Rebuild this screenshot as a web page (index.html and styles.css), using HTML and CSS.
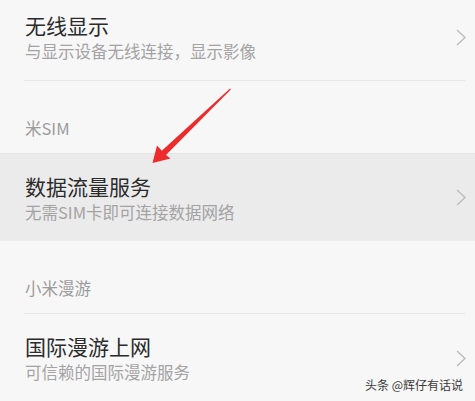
FILE: index.html
```html
<!DOCTYPE html>
<html lang="zh">
<head>
<meta charset="utf-8">
<link rel="stylesheet" href="styles.css">
</head>
<body>
<div class="page">
  <div class="row row-first">
    <div class="text">
      <div class="title">无线显示</div>
      <div class="sub">与显示设备无线连接，显示影像</div>
    </div>
    <svg class="chev" viewBox="0 0 10 17"><polyline points="1,1 9,8.5 1,16"/></svg>
  </div>
  <div class="divider"></div>
  <div class="section">米SIM</div>
  <div class="row row-active">
    <div class="text">
      <div class="title">数据流量服务</div>
      <div class="sub">无需SIM卡即可连接数据网络</div>
    </div>
    <svg class="chev" viewBox="0 0 10 17"><polyline points="1,1 9,8.5 1,16"/></svg>
  </div>
  <div class="section">小米漫游</div>
  <div class="divider"></div>
  <div class="row">
    <div class="text">
      <div class="title">国际漫游上网</div>
      <div class="sub">可信赖的国际漫游服务</div>
    </div>
    <svg class="chev" viewBox="0 0 10 17"><polyline points="1,1 9,8.5 1,16"/></svg>
  </div>
  <svg class="arrow" viewBox="0 0 475 401" width="475" height="401">
    <polygon points="230,88.5 230.8,89.6 166,155 170.5,158.5 152.5,163 157,145.5 161.8,150.8"/>
  </svg>
  <div class="watermark">头条 @辉仔有话说</div>
</div>
</body>
</html>
```

FILE: styles.css
```css
html, body {
  margin: 0;
  padding: 0;
  background: #f7f7f7;
}
body {
  font-family: "Noto Sans CJK SC", "Noto Sans", sans-serif;
  width: 475px;
  height: 401px;
  overflow: hidden;
}
.page {
  position: relative;
  width: 475px;
  height: 401px;
}
.row {
  display: flex;
  align-items: center;
  justify-content: space-between;
  height: 88px;
  box-sizing: border-box;
  padding: 0 9px 0 25px;
}
.row-first {
  height: 80px;
  padding-bottom: 6px;
}
.row-active {
  background: #ebebeb;
  border-top: 1px solid #e2e2e2;
  height: 88px;
}
.title {
  font-size: 21px;
  line-height: 28px;
  color: #2b2b2b;
}
.sub {
  font-size: 16.5px;
  line-height: 24px;
  color: #a3a3a3;
}
.chev {
  width: 10px;
  height: 17px;
  fill: none;
  stroke: #bcbcbc;
  stroke-width: 1.4;
}
.divider {
  height: 1px;
  background: #e6e6e6;
  margin: 0 10px 0 24px;
}
.section {
  height: 72px;
  box-sizing: border-box;
  padding: 37px 0 0 25px;
  font-size: 16.5px;
  line-height: 20px;
  color: #9c9c9c;
}
.arrow {
  position: absolute;
  left: 0;
  top: 0;
  fill: #ee2b2b;
}
.watermark {
  position: absolute;
  right: 12px;
  top: 376px;
  font-size: 12px;
  line-height: 18px;
  color: #3a3a3a;
}
```
